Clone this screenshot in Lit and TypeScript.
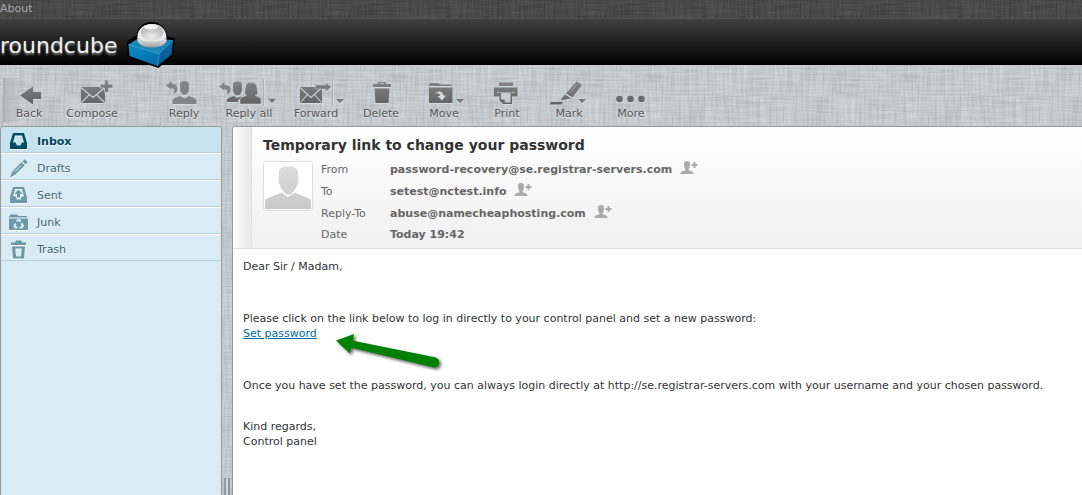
import { LitElement, html, svg, css, unsafeCSS } from "lit";
import { customElement, state } from "lit/decorators.js";

// Woven linen pattern: one noise layer stretched sideways, one stretched downwards.
const linen = (strength: number) => {
  const layer = (id: string, freq: string, seed: number) =>
    `<filter id='${id}' x='0' y='0' width='100%' height='100%' color-interpolation-filters='sRGB'><feTurbulence type='fractalNoise' baseFrequency='${freq}' numOctaves='2' seed='${seed}' stitchTiles='stitch'/><feColorMatrix values='2 0 0 0 -0.4 2 0 0 0 -0.4 2 0 0 0 -0.4 0 0 0 0 ${strength}'/></filter>`;
  const doc = `<svg xmlns='http://www.w3.org/2000/svg' width='256' height='256'>${layer("a", "0.03 0.5", 3)}${layer("b", "0.5 0.03", 8)}<rect width='256' height='256' filter='url(#a)'/><rect width='256' height='256' filter='url(#b)'/></svg>`;
  return unsafeCSS(`url("data:image/svg+xml,${encodeURIComponent(doc)}")`);
};

const caret = (x: number, y: number) => svg`<path d="M${x} ${y}h8l-4 4z" fill="#777"/>`;
const divider = (x: number) => svg`
  <path d="M${x + 0.5} 79v27" stroke="#a3a6a9" stroke-opacity=".8"/>
  <path d="M${x + 1.5} 79v27" stroke="#d6d9db"/>`;
const replyArrow = (x: number, y: number) => svg`
  <path transform="translate(${x} ${y})" d="M0 4.500L5.500 0v2.800c4 .2 6.200 2.200 6 5.200-.1 2.500-1.600 4.400-4 5.500 1.400-2.800 1.200-6-2-6.600V9z"/>`;
const man = (x: number, y: number) => svg`
  <path transform="translate(${x} ${y})" d="M7.500 3c0-2 1.800-3 4.500-3s4.500 1 4.500 3v5c0 3-2 6-4.500 6S7.500 11 7.500 8zM0 23v-3.500c0-2 4-3 7.500-4.500L12 17.500 16.500 15c3.500 1.500 7.500 2.500 7.500 4.500V23z"/>`;
const envelope = (x: number, y: number, w: number) => svg`
  <path d="M${x} ${y}h${w}v16h${-w}z"/>
  <path d="M${x} ${y + 0.5}l${w / 2} 10l${w / 2} -10M${x + 0.5} ${y + 15.500}l${w / 2 - 4} -8M${x + w - 0.5} ${y + 15.500}l${4 - w / 2} -8" fill="none" stroke="#cdd0d2" stroke-width="1.100"/>`;

const tools = [
  { label: "Back", kind: "back", x: 1, w: 56, icon: svg`<path d="M20 95.500L33 86.500V92h8v7h-8v5.500z"/>` },
  { label: "Compose", kind: "", x: 64, w: 56, icon: svg`${envelope(81, 87, 24)}
    <path d="M104.500 80h4v4.200h4.300v3.800h-4.300v4.300h-4V88h-4.300v-3.800h4.300z" stroke="#c3c7ca" stroke-width=".8"/>` },
  { label: "Reply", kind: "apart", x: 156, w: 56, icon: svg`${replyArrow(166, 81)}${man(172.500, 81)}` },
  { label: "Reply all", kind: "wide", x: 219, w: 60, icon: svg`${replyArrow(219, 82)}
    <path d="M233 84.500c0-2 1.700-3 4.500-3s4.500 1 4.500 3v5c0 3-2 6-4.500 6s-4.500-3-4.500-6zM227 102v-2c0-2 3-2.500 6.500-4l4 2 3-1.500 1 1-2 1.500c-1.500 1-1.500 2-1.500 3z"/>
    <path d="M246 95c-1-.5-1.500-2-1-4 .5-6 1-8.500 6-8.500s6 2.500 6.500 8.500c.5 2 0 3.500-1 4l-1.500.2c3 1.800 6 2.300 6 4.300v4.500h-21v-4.500c0-2 3.500-2.500 6.500-4.300z" stroke="#c3c7ca" stroke-width=".6"/>
    ${divider(263)}${caret(268, 99)}` },
  { label: "Forward", kind: "wide", x: 286, w: 60, icon: svg`${envelope(300, 87, 22)}
    <path d="M315.500 85h10v-2.500l6 4.500-6 4.500V89h-10z" stroke="#c3c7ca" stroke-width=".6"/>${divider(332)}${caret(336, 99)}` },
  { label: "Delete", kind: "", x: 353, w: 56, icon: svg`<path d="M373 84h4.500l1-2h7l1 2h4.500v3h-18zM380 83.200l-.4.8h4.800l-.4-.8zM374.500 88.500h15l-1 14.500h-13z" fill-rule="evenodd"/>` },
  { label: "Move", kind: "", x: 416, w: 56, icon: svg`
    <path d="M429 86v-1.500l1.500-1.500h7.500l2 1.500h11.500V86zM429 87.500h23.500V103H429z"/>
    <path d="M435 93.500c3-3.500 8-2.500 8.500 2h2.500l-4 5-4.500-4.500h2.500c0-2.500-2-3-5-2.500z" fill="#d5d8da"/>${caret(456, 99)}` },
  { label: "Print", kind: "", x: 479, w: 56, icon: svg`
    <path d="M499 82.500h14V86h-14zM494 87.500h23.500v9H494z"/>
    <path d="M497 92h17.500v1H497z" fill="#bfc3c6"/>
    <path d="M499.500 92.500h12.500v11.500h-9l-3.500-3.500z"/>
    <path d="M501 93h9.500v9.500h-5.500l-.5-3H501z" fill="#c8ccce"/>` },
  { label: "Mark", kind: "narrow", x: 542, w: 54, icon: svg`
    <path d="M576.500 81.500l5.500 3.500-9.500 12.500-6.500-4z"/><path d="M565 94.500l6 4-5.500 1-4 .8-.5-1z"/>
    <path d="M551 102h12l-1.500 2.500H549.500z"/><path d="M576.500 84.500l-6 8" stroke="#a2a5a7" fill="none"/>${caret(578, 99)}` },
  { label: "More", kind: "", x: 603, w: 56, icon: svg`<circle cx="619.500" cy="99" r="3.300"/><circle cx="630.500" cy="99" r="3.300"/><circle cx="641.500" cy="99" r="3.300"/>` },
];

const folders = [
  { label: "Inbox", icon: svg`<path d="M4 1h11l3 10v6H1v-6zM6 3.500L4 10.500h2.500l1.500 3h3.500l1.500-3H15L13 3.500z" fill-rule="evenodd"/>` },
  { label: "Drafts", icon: svg`<path d="M13.500 2.500L15.700.3l3 3-2.200 2.200zM12.500 3.300l3.200 3.200L6.500 15.500 1 18.500l2.500-6z"/><path d="M12.500 6L5.500 13" stroke="#d9ebf3" fill="none"/>` },
  { label: "Sent", icon: svg`<path d="M4 1h11l3 10v6H1v-6zM6 3L4 10.500h2.500l1.500 3h3.500l1.500-3H15L13 3z" fill-rule="evenodd"/><path d="M9.500 3.500l4 4.500h-2.500v3.500h-3V8H5.500z"/>` },
  { label: "Junk", icon: svg`<path d="M1 3V1.500h7L9.500 3H18v1.500H0V3zM0 5.500h19V17H0z"/><g fill="none" stroke="#d9ebf3" stroke-width="2.200"><path d="M7.700 8.600l1.200-1.600h1.600l1.200 1.800"/><path d="M6.700 10.500l-1.200 2.200 1 1.800h2"/><path d="M12.500 10.300l1.300 2.400-1 1.800h-2.300"/></g>` },
  { label: "Trash", icon: svg`<path d="M2 2.500h4L7 .5h5l1 2h4V5H2zM3 6.500h13l-1 12H4zM6.300 8.500l.7 8h5l.7-8z" fill-rule="evenodd"/>` },
];

const headers = [
  { name: "From", value: "password-recovery@se.registrar-servers.com", contact: true },
  { name: "To", value: "setest@nctest.info", contact: true },
  { name: "Reply-To", value: "abuse@namecheaphosting.com", contact: true },
  { name: "Date", value: "Today 19:42", contact: false },
];

@customElement("app-root")
export class AppRoot extends LitElement {
  @state() private selected = "Inbox";

  static styles = css`
    :host {
      display: flex;
      flex-direction: column;
      min-height: 100vh;
      box-sizing: border-box;
      overflow: hidden;
      background: ${linen(0.07)} #cbd1d6;
      color: #333;
      font: 11px/15px "DejaVu Sans", Verdana, sans-serif;
    }
    a { color: #0069a6; }
    button {
      font: inherit;
      color: inherit;
      background: none;
      border: 0;
      padding: 0;
      cursor: pointer;
    }
    .topline {
      padding: 1px 0 2px;
      background: ${linen(0.05)} #404040;
      border-bottom: 1px solid #555;
    }
    .topline a { color: #aaa; text-decoration: none; }
    .header {
      display: flex;
      height: 46px;
      background: linear-gradient(#404040, #000);
      position: relative;
      z-index: 1;
    }
    .brand {
      width: 127px;
      padding-top: 12px;
      font-size: 22px;
      line-height: 30px;
      color: #eee;
      text-shadow: 0 2px 2px #777;
      white-space: nowrap;
    }
    .cube { flex: none; width: 52px; height: 50px; }
    .toolbar { display: flex; gap: 7px; padding: 13px 0 4px 1px; }
    .tool {
      flex: none;
      width: 56px;
      line-height: 16px;
      color: #555;
      text-shadow: 0 1px 1px #eee;
      white-space: nowrap;
    }
    .tool.back {
      background: linear-gradient(90deg, #a9adb0 1px, #b6babd 2px, transparent 20px) 2px 0 no-repeat;
    }
    .tool.apart { margin-left: 29px; }
    .tool.wide { width: 60px; }
    .tool.narrow { width: 54px; }
    .tool svg { display: block; width: 100%; height: 28px; filter: drop-shadow(0 1px 0 #d8dbdd); }
    .main { display: flex; flex: 1; min-height: 0; }
    .folders {
      flex: none;
      width: 220px;
      background: #d9ebf3;
      border: 1px solid #999;
      border-bottom: 0;
      border-radius: 4px 4px 0 0;
      overflow: hidden;
    }
    .folder {
      display: flex;
      align-items: center;
      gap: 9px;
      width: 100%;
      height: 27px;
      padding: 3px 0 0 8px;
      border-bottom: 1px solid #b8d0d9;
      border-top: 1px solid #fff;
      color: #376572;
      fill: #6d98a5;
      text-shadow: 0 1px 1px #fff;
    }
    .folder svg { width: 19px; height: 19px; filter: drop-shadow(0 1px 0 #fff); }
    .folder:first-child { height: 26px; border-top: 0; }
    .folder.selected { background: #c7e3ef; color: #004458; fill: #004c61; font-weight: bold; }
    .splitter { flex: none; width: 10px; display: flex; align-items: flex-end; justify-content: center; }
    .grip {
      width: 6px;
      height: 17px;
      background: linear-gradient(90deg, #8f999f 2px, #d0d4d7 2px 4px, #8f999f 4px);
    }
    .message {
      flex: 1;
      min-width: 0;
      background: #fff;
      border: 1px solid #999;
      border-width: 1px 0 0 1px;
      border-radius: 4px 0 0 0;
      overflow: hidden;
    }
    .summary {
      display: flex;
      border-bottom: 1px solid #dfdfdf;
      background: linear-gradient(#fff, #f0f0f0);
    }
    .edge {
      flex: none;
      width: 18px;
      border-right: 1px solid #dfdfdf;
      background: linear-gradient(90deg, #fff, #e8e8e8);
    }
    .details { padding: 8px 11px 3px; }
    h1 { margin: 0; font-size: 14px; line-height: 20px; color: #333; }
    .info { display: flex; gap: 8px; }
    .photo {
      width: 48px;
      height: 48px;
      margin-top: 6px;
      border: 1px solid #ddd;
      border-radius: 3px;
      background: #fff;
    }
    table { border-collapse: collapse; margin-top: 3px; color: #666; }
    th, td { padding: 0; height: 22px; text-align: left; white-space: nowrap; }
    tr:last-child > * { height: 21px; }
    th { font-weight: normal; min-width: 69px; }
    td { font-weight: bold; }
    td a { color: inherit; text-decoration: none; }
    .add { margin: -2px 0 -2px 4px; vertical-align: -2px; }
    .add svg { display: block; width: 18px; height: 14px; }
    .body { padding: 10px 0 40px 10px; }
    p { margin: 0; }
    .gap { margin-top: 37px; }
    .close { margin-top: 26px; }
    .callout { position: relative; }
    .pointer { position: absolute; left: 87px; top: 0; width: 120px; height: 50px; }
  `;

  render() {
    return html`
      <nav class="topline"><a href="#about">About</a></nav>
      <header class="header">
        <div class="brand">roundcube</div>
        <svg class="cube" viewBox="127 19 52 50" aria-hidden="true">
          <defs>
            <linearGradient id="left" x2="1" y2="1"><stop stop-color="#0c8bc8" /><stop offset="1" stop-color="#006aa5" /></linearGradient>
            <linearGradient id="right" x2="0" y2="1"><stop stop-color="#0a6da3" /><stop offset="1" stop-color="#00578b" /></linearGradient>
            <linearGradient id="ball" x2="0" y2="1"><stop stop-color="#fff" /><stop offset=".7" stop-color="#e4e4e4" /><stop offset="1" stop-color="#999" /></linearGradient>
            <radialGradient id="dome" cy=".8"><stop stop-color="#eee" /><stop offset="1" stop-color="#c0c0c0" /></radialGradient>
          </defs>
          <path d="M127 41L137 35c0-7 6-13 14.500-13S166 28 167 36l8 2.500-2 17-14.500 12.500-31-10.500z" fill="#000" />
          <path d="M128.500 44.500L139 38l33.500 2-13.500 14z" fill="#1b86b8" />
          <path d="M128.500 44.500L159 54l-1.500 12L129.500 56z" fill="url(#left)" />
          <path d="M159 54l14-14-1.500 14.500L157.500 66z" fill="url(#right)" />
          <path d="M128.500 44.500L159 54l14-14M159 54l-1.500 12" fill="none" stroke="#42b4e5" stroke-width=".7" />
          <path d="M137.500 40c-1-9 4-16 14.500-16S167 31 166.500 40c-1 10-28 10-29 0z" fill="url(#ball)" />
          <ellipse cx="152" cy="32" rx="11.500" ry="7.500" fill="url(#dome)" />
          <path d="M138 38c3 7 25 7 28 0" fill="none" stroke="#bbb" />
          <ellipse cx="151" cy="27" rx="7" ry="2.500" fill="#fff" opacity=".8" />
        </svg>
      </header>
      <div class="toolbar" role="toolbar">
        ${tools.map(
          (t) => html`<button class="tool ${t.kind}">
            <svg viewBox="${t.x} 78 ${t.w} 28" fill="url(#metal)" aria-hidden="true">
              <defs><linearGradient id="metal" gradientUnits="userSpaceOnUse" x1="0" x2="0" y1="80" y2="105"><stop stop-color="#858585" /><stop offset="1" stop-color="#626262" /></linearGradient></defs>
              ${t.icon}</svg>${t.label}
          </button>`
        )}
      </div>
      <main class="main">
        <nav class="folders">
          ${folders.map(
            (f) => html`<button class="folder ${f.label === this.selected ? "selected" : ""}" @click=${() => (this.selected = f.label)}>
              <svg viewBox="0 0 19 19" aria-hidden="true">${f.icon}</svg>${f.label}
            </button>`
          )}
        </nav>
        <div class="splitter"><div class="grip"></div></div>
        <article class="message">
          <header class="summary">
            <div class="edge"></div>
            <div class="details">
              <h1>Temporary link to change your password</h1>
              <div class="info">
                <svg class="photo" viewBox="0 0 48 48" aria-hidden="true">
                  <defs><linearGradient id="grey" x2="0" y2="1"><stop stop-color="#dcdcdc" /><stop offset="1" stop-color="#c9c9c9" /></linearGradient></defs>
                  <path d="M15 10c0-4 4-5.500 9.500-5.500S34 6 34 10l.5 8c0 5-4 11-7 13.500-2 1.700-4 1.700-6 0-3-2.500-7-8.500-7-13.500zM1 47v-8c0-3 8-4.500 16.500-8.500L24 35l7-4.500C39 34.500 47 36 47 39v8z" fill="url(#grey)" />
                </svg>
                <table>
                  ${headers.map(
                    (h) => html`<tr>
                      <th scope="row">${h.name}</th>
                      <td>${h.contact
                        ? html`<a href="mailto:${h.value}">${h.value}</a>
                            <button class="add" aria-label="Add to address book">
                              <svg viewBox="0 0 18 14"><path d="M4 3c0-2 1-3 3-3s3 1 3 3c0 2.500-.6 4.500-1.500 5.500v.7c2.500.8 5 1.500 5 3V13H.5v-.8c0-1.500 2.500-2.200 5-3v-.7C4.600 7.500 4 5.500 4 3zM13.500 1h2v2h2v2h-2v2h-2V5h-2V3h2z" fill="#aaa" /></svg>
                            </button>`
                        : h.value}</td>
                    </tr>`
                  )}
                </table>
              </div>
            </div>
          </header>
          <div class="body">
            <p>Dear Sir / Madam,</p>
            <p class="gap">Please click on the link below to log in directly to your control panel and set a new password:</p>
            <p class="callout">
              <a href="#set-password">Set password</a>
              <svg class="pointer" viewBox="330 325 120 50" aria-hidden="true">
                <path d="M336 339.500L354 333l-1 6.800 82 16.400a5 5 0 0 1-2 10L351 346.500l-1.200 6z" fill="#008000" style="filter: drop-shadow(2px 2px 1.500px #0009)" />
              </svg>
            </p>
            <p class="gap">Once you have set the password, you can always login directly at http://se.registrar-servers.com with your username and your chosen password.</p>
            <p class="close">Kind regards,<br />Control panel</p>
          </div>
        </article>
      </main>
    `;
  }
}
